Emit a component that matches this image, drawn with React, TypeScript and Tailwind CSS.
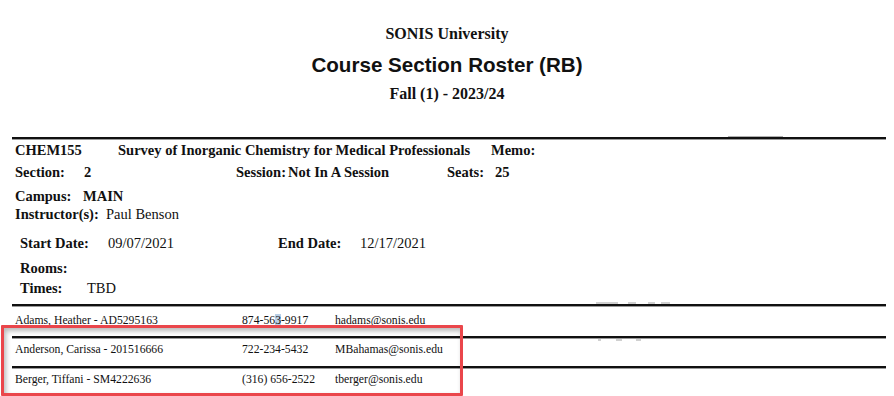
import React from "react";

const serif = { fontFamily: '"Liberation Serif", "Times New Roman", serif' };

function Rule({ className = "" }: { className?: string }) {
  return <div className={"ml-[12px] w-[874px] h-[2px] bg-[#111] shadow-[0_1px_0_#9a9a9a] " + className} />;
}

const students = [
  { name: "Adams, Heather - AD5295163", phone: "874-563-9917", email: "hadams@sonis.edu", row: "h-[30px] pt-[6px]" },
  { name: "Anderson, Carissa - 201516666", phone: "722-234-5432", email: "MBahamas@sonis.edu", row: "h-[28px] pt-[3px]" },
  { name: "Berger, Tiffani - SM4222636", phone: "(316) 656-2522", email: "tberger@sonis.edu", row: "h-[28px] pt-[3px]" },
];

export default function App() {
  return (
    <div className="relative w-[894px] h-[396px] overflow-hidden bg-white text-[#111]" style={serif}>
      {/* heading */}
      <div className="pt-[24px] flex flex-col items-center">
        <div className="h-[20px] leading-[20px] text-[16px] font-bold">SONIS University</div>
        <div
          className="mt-[9px] h-[24px] leading-[24px] text-[20.6px] font-bold"
          style={{ fontFamily: '"Liberation Sans", Arial, sans-serif' }}
        >
          Course Section Roster (RB)
        </div>
        <div className="mt-[7px] h-[20px] leading-[20px] text-[16px] font-bold">Fall (1) - 2023/24</div>
      </div>

      <Rule className="mt-[33px]" />

      {/* course info */}
      <div className="text-[14.5px] leading-[18px] font-bold">
        <div className="mt-[2px] pl-[15px] flex">
          <span className="w-[103px]">CHEM155</span>
          <span className="w-[373px]">Survey of Inorganic Chemistry for Medical Professionals</span>
          <span>Memo:</span>
        </div>
        <div className="mt-[4px] pl-[15px] flex">
          <span className="w-[69px]">Section:</span>
          <span className="w-[152px]">2</span>
          <span className="w-[52px]">Session:</span>
          <span className="w-[159px]">Not In A Session</span>
          <span className="w-[48px]">Seats:</span>
          <span>25</span>
        </div>
        <div className="mt-[6px] pl-[15px] flex">
          <span className="w-[68px]">Campus:</span>
          <span>MAIN</span>
        </div>
        <div className="pl-[15px] flex">
          <span className="w-[91px]">Instructor(s):</span>
          <span className="font-normal">Paul Benson</span>
        </div>
        <div className="mt-[11px] pl-[20px] flex">
          <span className="w-[88px]">Start Date:</span>
          <span className="w-[170px] font-normal">09/07/2021</span>
          <span className="w-[82px]">End Date:</span>
          <span className="font-normal">12/17/2021</span>
        </div>
        <div className="mt-[7px] pl-[20px]">Rooms:</div>
        <div className="mt-[2px] pl-[20px] flex">
          <span className="w-[67px]">Times:</span>
          <span className="font-normal">TBD</span>
        </div>
      </div>

      {/* students */}
      <div className="mt-[7px] text-[11.7px] leading-[18px]">
        {students.map((s, i) => (
          <div key={s.email}>
            <Rule />
            <div className={"pl-[15px] flex " + s.row}>
              <span className="w-[227px]">{s.name}</span>
              <span className="w-[93px]">
                {i === 0 ? (
                  <>
                    874-56<span className="bg-[#b9cfe6]">3</span>-9917
                  </>
                ) : (
                  s.phone
                )}
              </span>
              <span>{s.email}</span>
            </div>
          </div>
        ))}
      </div>

      {/* faint scan marks */}
      <div className="absolute left-[596px] top-[302px] w-[22px] h-[2px] bg-[#d0d0d0]" />
      <div className="absolute left-[628px] top-[302px] w-[8px] h-[2px] bg-[#d0d0d0]" />
      <div className="absolute left-[648px] top-[302px] w-[7px] h-[2px] bg-[#d0d0d0]" />
      <div className="absolute left-[661px] top-[302px] w-[9px] h-[2px] bg-[#d0d0d0]" />
      <div className="absolute left-[598px] top-[339px] w-[3px] h-[2px] bg-[#d0d0d0]" />
      <div className="absolute left-[616px] top-[339px] w-[6px] h-[2px] bg-[#d0d0d0]" />
      <div className="absolute left-[636px] top-[339px] w-[5px] h-[2px] bg-[#d0d0d0]" />
      <div className="absolute left-[728px] top-[136px] w-[55px] h-[1px] bg-[#b0b0b0]" />

      {/* highlight box */}
      <div className="absolute left-[1px] top-[325px] w-[462px] h-[71px] border-[3.5px] border-[#ea464b] shadow-[inset_2px_3px_5px_rgba(0,0,0,0.28)] rounded-[1px]" />
    </div>
  );
}
